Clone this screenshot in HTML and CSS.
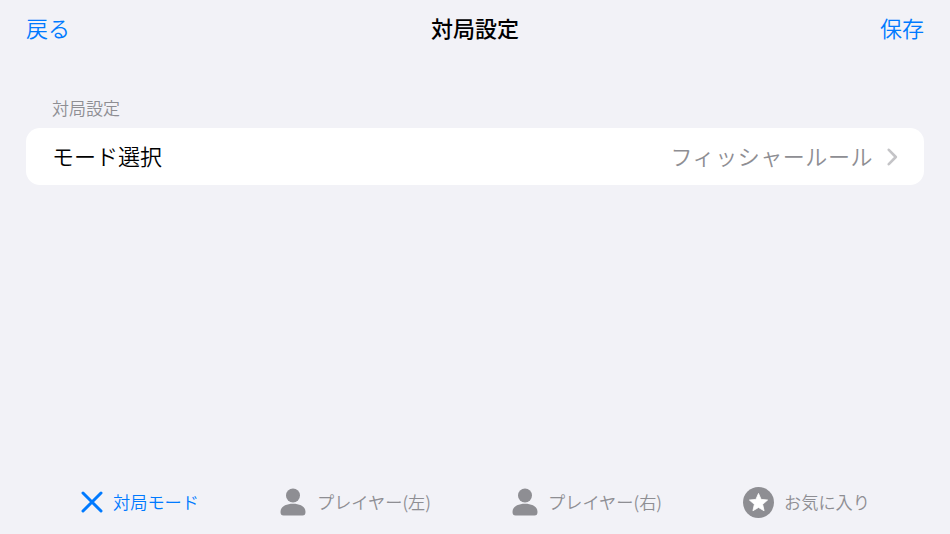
FILE: index.html
```html
<!DOCTYPE html>
<html lang="ja">
    <head>
        <meta charset="UTF-8">
        <title>対局設定</title>
        <link rel="stylesheet" href="styles.css">
    </head>
    <body>
        <div class="navbar">
            <a class="nav-btn">戻る</a>
            <span class="nav-title">対局設定</span>
            <a class="nav-btn">保存</a>
        </div>

        <div class="content">
            <div class="section-label">対局設定</div>
            <div class="row">
                <span class="row-name">モード選択</span>
                <span class="row-value">フィッシャールール</span>
                <svg class="chevron" width="11" height="18" viewBox="0 0 11 18">
                    <path d="M1.8 1.8 L8.8 9 L1.8 16.2" fill="none" stroke="#c4c4c7" stroke-width="2.6" stroke-linecap="round" stroke-linejoin="round"/>
                </svg>
            </div>
        </div>

        <div class="tabbar">
            <div class="tab tab-active">
                <svg width="22" height="22" viewBox="0 0 22 22">
                    <path d="M2 2 L20 20 M20 2 L2 20" fill="none" stroke="#007aff" stroke-width="3" stroke-linecap="round"/>
                </svg>
                <span>対局モード</span>
            </div>
            <div class="tab tab-player">
                <svg width="26" height="28" viewBox="0 0 26 28">
                    <circle cx="13" cy="7.5" r="7" fill="#8e8e93"/>
                    <path d="M0.5 24 C0.5 18.5 6 15.7 13 15.7 C20 15.7 25.5 18.5 25.5 24 C25.5 26.5 24.5 27.5 22.5 27.5 L3.5 27.5 C1.5 27.5 0.5 26.5 0.5 24 Z" fill="#8e8e93"/>
                </svg>
                <span>プレイヤー(左)</span>
            </div>
            <div class="tab">
                <svg width="26" height="28" viewBox="0 0 26 28">
                    <circle cx="13" cy="7.5" r="7" fill="#8e8e93"/>
                    <path d="M0.5 24 C0.5 18.5 6 15.7 13 15.7 C20 15.7 25.5 18.5 25.5 24 C25.5 26.5 24.5 27.5 22.5 27.5 L3.5 27.5 C1.5 27.5 0.5 26.5 0.5 24 Z" fill="#8e8e93"/>
                </svg>
                <span>プレイヤー(右)</span>
            </div>
            <div class="tab">
                <svg width="31" height="31" viewBox="0 0 30 30">
                    <circle cx="15" cy="15" r="15" fill="#8e8e93"/>
                    <path d="M15 6.2 L17.5 12 L23.8 12.6 L19 16.8 L20.4 23 L15 19.8 L9.6 23 L11 16.8 L6.2 12.6 L12.5 12 Z" fill="#fff" stroke="#fff" stroke-width="0.8" stroke-linejoin="round"/>
                </svg>
                <span>お気に入り</span>
            </div>
        </div>
    </body>
</html>
```

FILE: styles.css
```css
html, body {
    height: 100%;
}
body {
    margin: 0;
    background-color: #f2f2f7;
    color: #000;
    font-family: "Noto Sans CJK JP", "Inter", "Liberation Sans", sans-serif;
    display: flex;
    flex-direction: column;
    overflow: hidden;
}
.navbar {
    height: 54px;
    padding: 0 26px;
    display: flex;
    align-items: center;
    justify-content: space-between;
}
.nav-btn {
    font-size: 22px;
    font-weight: 350;
    color: #007aff;
}
.nav-title {
    font-size: 22px;
    font-weight: 500;
}
.content {
    flex: 1;
    padding: 0 26px;
}
.section-label {
    margin-top: 41px;
    padding-left: 26px;
    height: 33px;
    line-height: 26px;
    font-size: 17px;
    font-weight: 350;
    color: #8e8e93;
}
.row {
    height: 57px;
    padding: 0 26px;
    background-color: #fff;
    border-radius: 14px;
    display: flex;
    align-items: center;
    font-size: 22px;
    font-weight: 350;
}
.row-name {
    flex: 1;
    padding-bottom: 4px;
}
.row-value {
    padding-bottom: 4px;
    letter-spacing: 0.55px;
    color: #8e8e93;
}
.chevron {
    margin-left: 14px;
}
.tabbar {
    height: 64px;
    padding: 0 80px 0 81px;
    display: flex;
    justify-content: space-between;
}
.tab {
    display: flex;
    align-items: center;
    gap: 10px;
    font-size: 17.2px;
    font-weight: 350;
    color: #8e8e93;
}
.tab span {
    padding-bottom: 2px;
}
.tab-player {
    gap: 11px;
}
.tab-active {
    color: #007aff;
}
```
